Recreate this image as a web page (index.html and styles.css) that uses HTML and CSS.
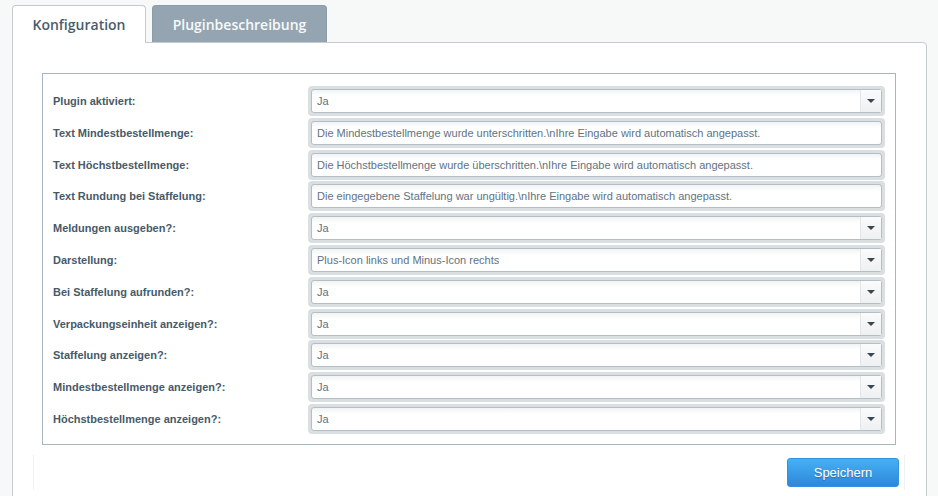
FILE: index.html
```html
<!DOCTYPE html>
<html lang="de">
<head>
<meta charset="utf-8">
<title>Konfiguration</title>
<link rel="stylesheet" href="styles.css">
</head>
<body>
<div class="wrap">
  <div class="tabs">
    <div class="tab tab-active">Konfiguration</div>
    <div class="tab tab-inactive">Pluginbeschreibung</div>
  </div>
  <div class="panel">
    <div class="box">
      <div class="row"><div class="label">Plugin aktiviert:</div><div class="frame"><div class="field select"><span class="val">Ja</span><span class="arrow"></span></div></div></div>
      <div class="row"><div class="label">Text Mindestbestellmenge:</div><div class="frame"><div class="field"><span class="val">Die Mindestbestellmenge wurde unterschritten.\nIhre Eingabe wird automatisch angepasst.</span></div></div></div>
      <div class="row"><div class="label">Text Höchstbestellmenge:</div><div class="frame"><div class="field"><span class="val">Die Höchstbestellmenge wurde überschritten.\nIhre Eingabe wird automatisch angepasst.</span></div></div></div>
      <div class="row"><div class="label">Text Rundung bei Staffelung:</div><div class="frame"><div class="field"><span class="val">Die eingegebene Staffelung war ungültig.\nIhre Eingabe wird automatisch angepasst.</span></div></div></div>
      <div class="row"><div class="label">Meldungen ausgeben?:</div><div class="frame"><div class="field select"><span class="val">Ja</span><span class="arrow"></span></div></div></div>
      <div class="row"><div class="label">Darstellung:</div><div class="frame"><div class="field select"><span class="val">Plus-Icon links und Minus-Icon rechts</span><span class="arrow"></span></div></div></div>
      <div class="row"><div class="label">Bei Staffelung aufrunden?:</div><div class="frame"><div class="field select"><span class="val">Ja</span><span class="arrow"></span></div></div></div>
      <div class="row"><div class="label">Verpackungseinheit anzeigen?:</div><div class="frame"><div class="field select"><span class="val">Ja</span><span class="arrow"></span></div></div></div>
      <div class="row"><div class="label">Staffelung anzeigen?:</div><div class="frame"><div class="field select"><span class="val">Ja</span><span class="arrow"></span></div></div></div>
      <div class="row"><div class="label">Mindestbestellmenge anzeigen?:</div><div class="frame"><div class="field select"><span class="val">Ja</span><span class="arrow"></span></div></div></div>
      <div class="row"><div class="label">Höchstbestellmenge anzeigen?:</div><div class="frame"><div class="field select"><span class="val">Ja</span><span class="arrow"></span></div></div></div>
    </div>
    <div class="footer">
      <button class="btn">Speichern</button>
    </div>
  </div>
</div>
</body>
</html>
```
FILE: styles.css
```css
html, body {
  margin: 0;
  padding: 0;
  background: #f7f8f8;
  font-family: "Liberation Sans", Arial, sans-serif;
}
.wrap {
  padding: 5px 11px 0 12px;
}
.tabs {
  display: flex;
  gap: 6px;
  height: 37px;
  position: relative;
  z-index: 1;
}
.tab {
  font-family: "Open Sans", sans-serif;
  font-weight: 600;
  font-size: 14px;
  box-sizing: border-box;
  height: 38px;
  display: flex;
  align-items: center;
  justify-content: center;
  border-radius: 4px 4px 0 0;
}
.tab-active {
  width: 134px;
  background: #fff;
  border: 1px solid #c5cacd;
  border-bottom: none;
  color: #4a5d6b;
}
.tab-inactive {
  width: 175px;
  height: 37px;
  background: #94a5b1;
  border: 1px solid #8c9ca8;
  border-bottom: none;
  color: #f7f9fa;
}
.panel {
  background: #fff;
  border: 1px solid #c5cacd;
  border-radius: 0 4px 0 0;
  padding: 30px 30px 0 29px;
  height: 460px;
  box-sizing: border-box;
}
.box {
  border: 1px solid #a9b5bd;
  padding: 12px 10px 10px 10px;
  display: flex;
  flex-direction: column;
  gap: 1.8px;
}
.row {
  display: flex;
  align-items: center;
  height: 30px;
}
.label {
  width: 255px;
  flex: none;
  font-size: 11px;
  font-weight: bold;
  color: #475a68;
}
.frame {
  flex: 1;
  height: 30px;
  box-sizing: border-box;
  padding: 3px;
  background: #dadfe2;
  border-radius: 4px;
}
.field {
  height: 24px;
  box-sizing: border-box;
  border: 1px solid #b4bec6;
  border-radius: 3px;
  background: linear-gradient(#f1f3f4, #fff 6px);
  display: flex;
  align-items: center;
  font-size: 11px;
  color: #5f7283;
}
.val {
  flex: 1;
  padding-left: 5px;
  white-space: nowrap;
  overflow: hidden;
}
.arrow {
  width: 20px;
  height: 22px;
  flex: none;
  border-left: 1px solid #e3e7ea;
  background: linear-gradient(#fafbfb, #eef0f1);
  display: flex;
  align-items: center;
  justify-content: center;
}
.arrow::after {
  content: "";
  border-left: 4px solid transparent;
  border-right: 4px solid transparent;
  border-top: 4px solid #3a4650;
}
.footer {
  margin: 10px -9px 0 -9px;
  height: 35px;
  border-left: 1px solid #f0f2f3;
  border-right: 1px solid #f0f2f3;
  display: flex;
  justify-content: flex-end;
  align-items: flex-start;
  padding: 3px 5px 0 0;
  box-sizing: border-box;
}
.btn {
  width: 112px;
  height: 29px;
  border: 1px solid #3590df;
  border-radius: 3px;
  background: linear-gradient(#45b1f6, #2f86d9);
  color: #fff;
  font-family: "Liberation Sans", Arial, sans-serif;
  font-size: 13px;
  text-shadow: 0 1px 1px rgba(0,0,0,0.25);
  padding: 0;
}
```
